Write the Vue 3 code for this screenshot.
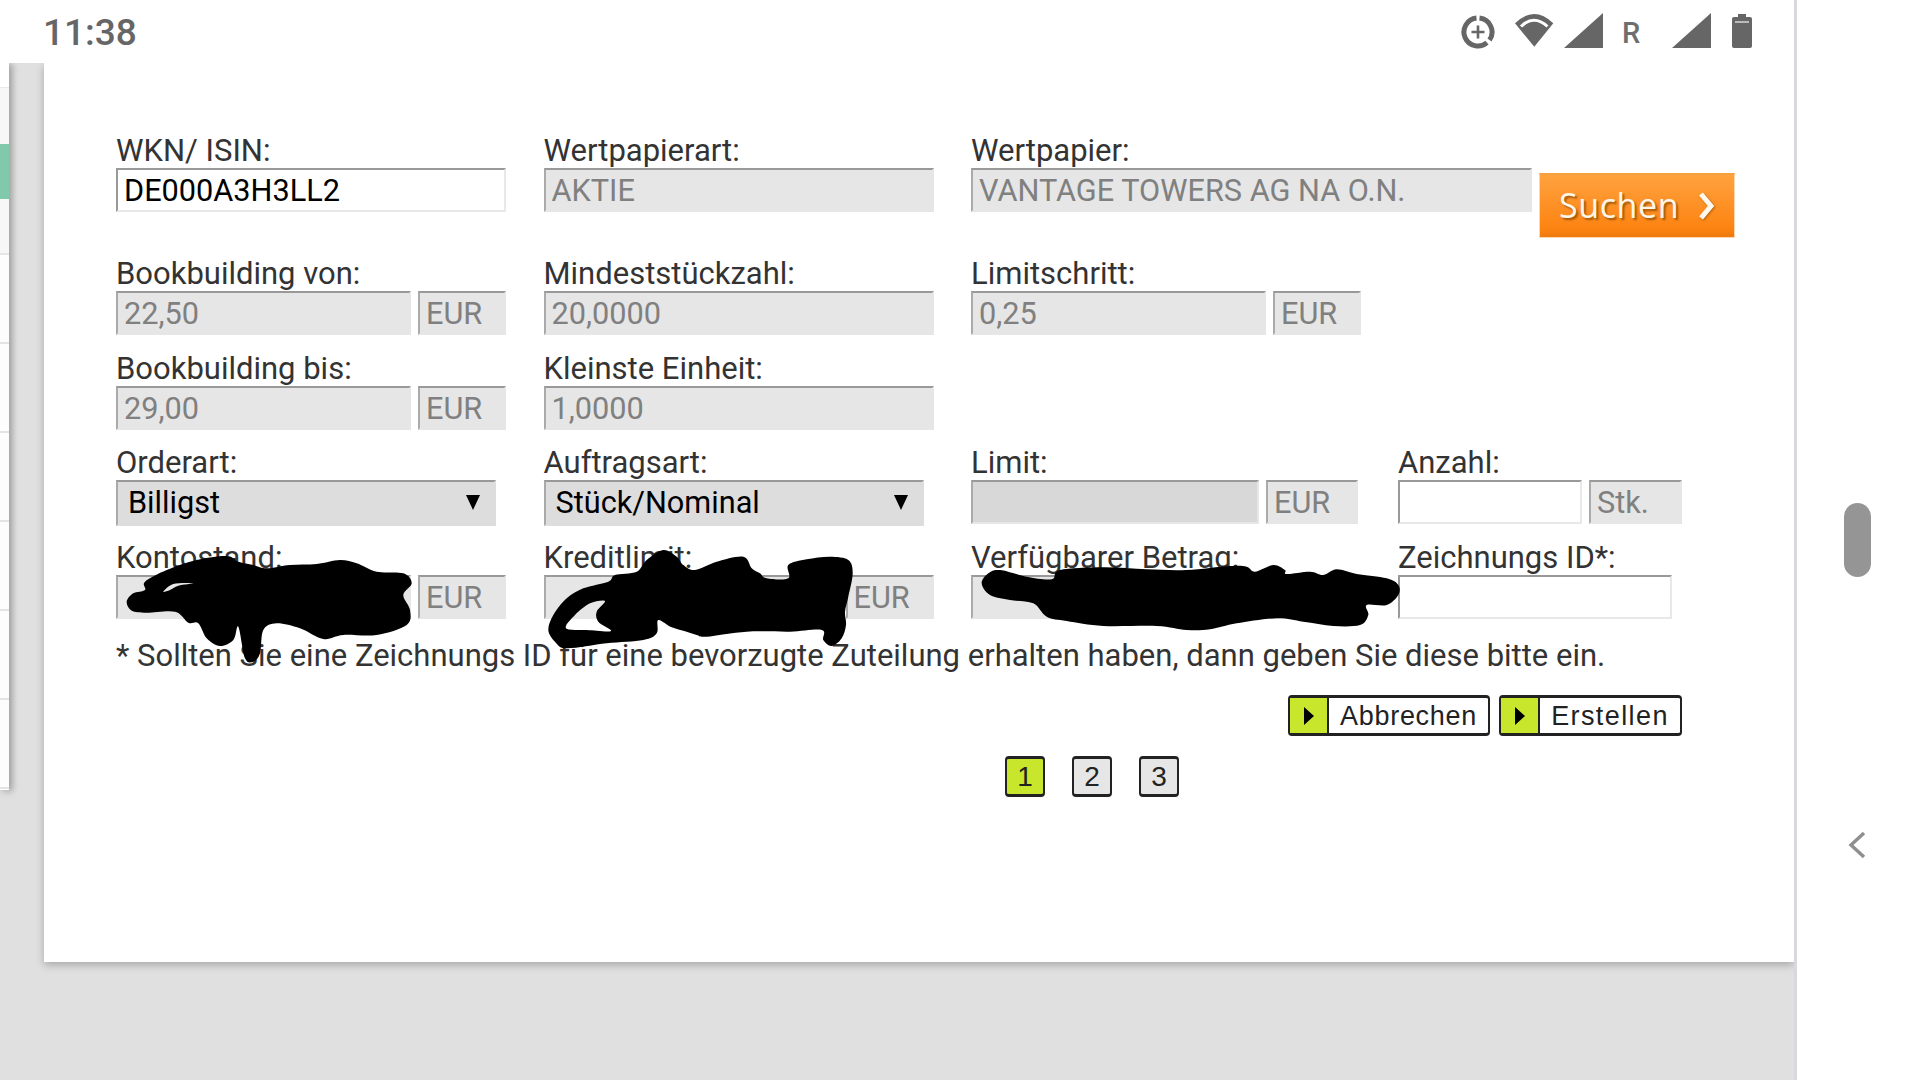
<script setup>
const smooth = (pts) => {
  const n = pts.length
  let d = `M${pts[0][0]} ${pts[0][1]}`
  for (let i = 0; i < n; i++) {
    const p0 = pts[(i - 1 + n) % n], p1 = pts[i], p2 = pts[(i + 1) % n], p3 = pts[(i + 2) % n]
    const c1 = [p1[0] + (p2[0] - p0[0]) / 6, p1[1] + (p2[1] - p0[1]) / 6]
    const c2 = [p2[0] - (p3[0] - p1[0]) / 6, p2[1] - (p3[1] - p1[1]) / 6]
    d += `C${c1[0].toFixed(1)} ${c1[1].toFixed(1)} ${c2[0].toFixed(1)} ${c2[1].toFixed(1)} ${p2[0].toFixed(1)} ${p2[1].toFixed(1)}`
  }
  return d + 'Z'
}
const map = (ox, oy, pts) => pts.map(([x, y]) => [ox + x / 3, oy + y / 3])
const blobA = smooth(map(110, 540, [[50,185],[70,160],[105,150],[105,125],[170,90],[260,60],[350,48],[385,65],[430,75],[470,85],[540,75],[620,72],[690,60],[740,70],[800,95],[880,100],[905,130],[880,165],[900,210],[890,255],[800,285],[700,285],[640,297],[570,265],[500,250],[460,270],[450,340],[430,365],[405,355],[385,260],[370,300],[330,318],[290,295],[265,250],[235,248],[195,215],[110,218],[65,212]]))
const glint = smooth(map(110, 540, [[160,155],[190,132],[250,130],[205,137],[180,150]]))
const blobB = smooth(map(540, 540, [[25,270],[40,225],[80,175],[130,145],[205,125],[225,105],[290,95],[320,60],[370,30],[410,50],[430,75],[465,90],[530,65],[610,50],[635,85],[660,100],[680,115],[745,115],[745,75],[800,58],[870,50],[925,60],[938,100],[925,170],[915,215],[918,255],[905,295],[875,318],[850,300],[845,270],[750,275],[620,275],[500,290],[470,285],[440,275],[395,262],[355,240],[350,280],[310,300],[200,310],[80,325],[45,305]])) +
  smooth(map(540, 540, [[78,265],[105,225],[150,190],[195,183],[170,215],[175,245],[213,273],[140,270]]))
const blobC = smooth(map(970, 550, [[35,100],[55,70],[90,60],[170,80],[245,88],[270,60],[400,52],[530,58],[650,60],[780,48],[830,50],[855,65],[910,45],[945,60],[950,72],[1020,65],[1060,75],[1100,58],[1160,72],[1250,85],[1285,105],[1285,135],[1250,165],[1190,165],[1195,195],[1170,225],[1090,228],[1000,215],[920,205],[800,220],[720,238],[650,240],[560,228],[400,228],[290,213],[230,200],[190,160],[120,150],[60,135]]))
</script>

<template>
  <div class="screen">
    <div class="main">
      <header class="status">
        <span class="time">11:38</span>
        <div class="icons">
          <svg class="i-data" width="34" height="36" viewBox="0 0 34 36">
            <path d="M18.5 5.1A14 14 0 0 1 28.5 27M26 29.7A14 14 0 1 1 15.5 5.1" fill="none" stroke="#666" stroke-width="5" />
            <path d="M10.5 19H23.5M17 12.5V25.5" stroke="#666" stroke-width="2.6" />
          </svg>
          <svg class="i-wifi" width="40" height="36" viewBox="0 0 40 36">
            <path d="M1 10.3Q20 -8.3 39.3 10.3L20.3 33.7Z" fill="#666" />
            <path d="M7 13.5Q20 1 33.5 13.5" fill="none" stroke="#fff" stroke-width="3" />
          </svg>
          <svg class="i-signal" width="40" height="36" viewBox="0 0 40 36"><path d="M0 35H39V0Z" fill="#666" /></svg>
          <span class="roam">R</span>
          <svg class="i-signal2" width="40" height="36" viewBox="0 0 40 36"><path d="M0 35H39V0Z" fill="#666" /></svg>
          <svg class="i-batt" width="20" height="36" viewBox="0 0 20 36">
            <path d="M6 1H14V4H18Q20 4 20 6V33Q20 35 18 35H2Q0 35 0 33V6Q0 4 2 4H6Z" fill="#666" />
            <rect x="3" y="8" width="14" height="2" fill="#bbb" />
          </svg>
        </div>
      </header>

      <div class="stage">
        <aside class="side">
          <div class="s-top"></div>
          <div class="s-item h56"></div>
          <div class="s-green"></div>
          <div class="s-item h56 line"></div>
          <div class="s-row"></div>
          <div class="s-row"></div>
          <div class="s-row"></div>
          <div class="s-row"></div>
          <div class="s-row"></div>
          <div class="s-row"></div>
        </aside>

        <section class="dialog">
          <form class="form" @submit.prevent>
            <div class="row">
              <div class="field">
                <label>WKN/ ISIN:</label>
                <div class="box w390 white dark">DE000A3H3LL2</div>
              </div>
              <div class="field">
                <label>Wertpapierart:</label>
                <div class="box w390 off">AKTIE</div>
              </div>
              <div class="field wide">
                <label>Wertpapier:</label>
                <div class="with-btn">
                  <div class="box w561 off">VANTAGE TOWERS AG NA O.N.</div>
                  <button type="button" class="search">
                    <span>Suchen</span>
                    <svg width="17" height="30" viewBox="0 0 17 30"><path d="M3 3L13 15L3 27" fill="none" stroke="#fff8ee" stroke-width="5" /></svg>
                  </button>
                </div>
              </div>
            </div>

            <div class="row">
              <div class="field">
                <label>Bookbuilding von:</label>
                <div class="pair"><div class="box w295 off">22,50</div><div class="box w88 off">EUR</div></div>
              </div>
              <div class="field">
                <label>Mindeststückzahl:</label>
                <div class="box w390 off">20,0000</div>
              </div>
              <div class="field">
                <label>Limitschritt:</label>
                <div class="pair"><div class="box w295 off">0,25</div><div class="box w88 off">EUR</div></div>
              </div>
            </div>

            <div class="row">
              <div class="field">
                <label>Bookbuilding bis:</label>
                <div class="pair"><div class="box w295 off">29,00</div><div class="box w88 off">EUR</div></div>
              </div>
              <div class="field">
                <label>Kleinste Einheit:</label>
                <div class="box w390 off">1,0000</div>
              </div>
            </div>

            <div class="row">
              <div class="field">
                <label>Orderart:</label>
                <div class="select"><span>Billigst</span><i class="arrow"></i></div>
              </div>
              <div class="field">
                <label>Auftragsart:</label>
                <div class="select"><span>Stück/Nominal</span><i class="arrow"></i></div>
              </div>
              <div class="field">
                <label>Limit:</label>
                <div class="pair"><div class="box w288 off darker"></div><div class="box w92 off">EUR</div></div>
              </div>
              <div class="field">
                <label>Anzahl:</label>
                <div class="pair"><div class="box w184 white"></div><div class="box w93 off">Stk.</div></div>
              </div>
            </div>

            <div class="row">
              <div class="field">
                <label>Kontostand:</label>
                <div class="pair"><div class="box w295 off"></div><div class="box w88 off">EUR</div></div>
              </div>
              <div class="field">
                <label>Kreditlimit:</label>
                <div class="pair"><div class="box w295 off"></div><div class="box w88 off">EUR</div></div>
              </div>
              <div class="field">
                <label>Verfügbarer Betrag:</label>
                <div class="box w390 off"></div>
              </div>
              <div class="field">
                <label>Zeichnungs ID*:</label>
                <div class="box w274 white"></div>
              </div>
            </div>

            <p class="note">* Sollten Sie eine Zeichnungs ID für eine bevorzugte Zuteilung erhalten haben, dann geben Sie diese bitte ein.</p>

            <div class="actions">
              <button type="button" class="act abort"><span class="tip"><i></i></span><span class="lbl">Abbrechen</span></button>
              <button type="button" class="act make"><span class="tip"><i></i></span><span class="lbl">Erstellen</span></button>
            </div>

            <nav class="pages">
              <span class="page on">1</span>
              <span class="page">2</span>
              <span class="page">3</span>
            </nav>
          </form>
        </section>
      </div>
    </div>

    <aside class="rail">
      <div class="handle"></div>
      <svg class="back" width="18" height="28" viewBox="0 0 18 28"><path d="M16 2L3 14L16 26" fill="none" stroke="#8f8f8f" stroke-width="3.4" /></svg>
    </aside>

    <svg class="scribble" width="1920" height="1080" viewBox="0 0 1920 1080">
      <path :d="blobA" fill="#000" />
      <path :d="glint" fill="#e6e6e6" />
      <path :d="blobB" fill="#000" fill-rule="evenodd" />
      <path :d="blobC" fill="#000" />
    </svg>
  </div>
</template>

<style scoped>
.screen {
  position: relative;
  display: flex;
  width: 1920px;
  height: 1080px;
  overflow: hidden;
  background: #fff;
  font-family: Roboto, "Liberation Sans", sans-serif;
}
.main {
  display: flex;
  flex-direction: column;
  width: 1794px;
  height: 1080px;
}
.status {
  display: flex;
  justify-content: space-between;
  height: 63px;
  padding: 13px 42px 0 43px;
  box-sizing: border-box;
  background: #fff;
  flex: none;
}
.time {
  font-size: 37px;
  font-weight: 500;
  line-height: 40px;
  color: #666;
}
.icons { display: flex; align-items: flex-start; }
.icons svg { display: block; flex: none; }
.i-wifi { margin-left: 19px; }
.i-signal { margin-left: 10px; }
.roam {
  margin-left: 18px;
  width: 19px;
  font-size: 29px;
  font-weight: 500;
  line-height: 40px;
  color: #6e6e6e;
}
.i-signal2 { margin-left: 31px; }
.i-batt { margin-left: 20px; }

.stage {
  position: relative;
  display: flex;
  align-items: flex-start;
  flex: 1;
  overflow: hidden;
  background: #e0e0e0;
}
.side {
  width: 9px;
  height: 727px;
  flex: none;
  background: #fff;
  box-shadow: 3px 1px 7px rgba(0, 0, 0, 0.32);
}
.s-top { height: 25px; background: #fff; border-bottom: 1px solid #e8e8e8; box-sizing: border-box; }
.s-item { background: #f7f7f7; }
.h56 { height: 56px; }
.line { border-bottom: 2px solid #e6e6e6; box-sizing: border-box; }
.s-green { height: 55px; background: #80c9aa; }
.s-row {
  height: 89px;
  background: #fdfdfd;
  border-bottom: 2px solid #e4e4e4;
  box-sizing: border-box;
}

.dialog {
  width: 1750px;
  height: 899px;
  margin-left: 35px;
  flex: none;
  background: #fff;
  box-shadow: 0 3px 8px rgba(0, 0, 0, 0.25);
}
.form {
  display: grid;
  grid-template-rows: 123px 95px 94px 95px 98px auto auto auto;
  width: 1566px;
  padding: 69px 0 0 72px;
}
.row {
  display: grid;
  grid-template-columns: 427.5px 427.5px 427px auto;
  align-content: start;
}
.field { min-width: 0; }
.field.wide { grid-column: 3 / span 2; }
label {
  display: block;
  height: 36px;
  font-size: 31px;
  line-height: 38px;
  color: #333;
}
.box {
  box-sizing: border-box;
  height: 44px;
  padding-left: 6px;
  font-size: 30.7px;
  line-height: 41px;
  white-space: nowrap;
  border-style: solid;
  border-width: 2px;
  flex: none;
}
.off {
  background: #e6e6e6;
  color: #808080;
  border-color: #999 #e6e6e6 #e6e6e6 #aaa;
}
.darker { background: #d8d8d8; border-color: #999 #e6e6e6 #e6e6e6 #aaa; }
.white {
  background: #fff;
  border-color: #999 #e8e8e8 #e8e8e8 #999;
}
.dark { color: #000; }
.w390 { width: 390px; }
.w561 { width: 561px; }
.w295 { width: 295px; }
.w88 { width: 88px; }
.w288 { width: 288px; }
.w92 { width: 92px; }
.w184 { width: 184px; }
.w93 { width: 93px; }
.w274 { width: 274px; }
.pair { display: flex; gap: 7px; }
.with-btn { display: flex; align-items: flex-start; gap: 7px; }

.search {
  display: flex;
  align-items: center;
  width: 196px;
  height: 65px;
  margin-top: 5px;
  padding: 0 0 0 19px;
  box-sizing: border-box;
  border: 1px solid #fbd9b0;
  border-top: 2px solid #f8a040;
  background: linear-gradient(#ffa23f, #fd8412 85%, #ee7a0c);
  flex: none;
  cursor: pointer;
}
.search span {
  font-family: "Open Sans", sans-serif;
  font-size: 34px;
  letter-spacing: 0.6px;
  line-height: 44px;
  margin-top: -3px;
  color: #fff6e8;
  text-shadow: 2px 2px 2px rgba(130, 70, 0, 0.75);
}
.search svg { margin-left: 19px; filter: drop-shadow(1px 1px 1px rgba(130, 70, 0, 0.6)); }

.select {
  display: flex;
  align-items: center;
  justify-content: space-between;
  box-sizing: border-box;
  width: 380px;
  height: 46px;
  padding: 0 14px 2px 10px;
  background: #ddd;
  border-style: solid;
  border-width: 2px;
  border-color: #999 #ddd #ddd #aaa;
  font-size: 30.7px;
  color: #000;
}
.arrow {
  width: 0;
  height: 0;
  border-left: 7px solid transparent;
  border-right: 7px solid transparent;
  border-top: 15px solid #000;
}
.note {
  margin: 0;
  font-size: 31px;
  line-height: 38px;
  height: 36px;
  color: #333;
  white-space: nowrap;
}
.actions {
  display: flex;
  justify-content: flex-end;
  gap: 9px;
  margin-top: 22px;
}
.act {
  display: flex;
  align-items: stretch;
  height: 41px;
  padding: 0;
  box-sizing: border-box;
  border-style: solid;
  border-color: #222;
  border-width: 3px 2px;
  border-radius: 4px;
  background: #fff;
  font-family: "Liberation Sans", sans-serif;
  color: #222;
  cursor: pointer;
}
.abort { width: 202px; }
.make { width: 183px; }
.tip {
  display: flex;
  align-items: center;
  justify-content: center;
  width: 39px;
  background: #c8e62c;
  border-right: 2px solid #222;
  box-sizing: border-box;
  flex: none;
}
.tip i {
  width: 0;
  height: 0;
  border-top: 9px solid transparent;
  border-bottom: 9px solid transparent;
  border-left: 10px solid #000;
}
.lbl {
  flex: 1;
  font-size: 27px;
  line-height: 36px;
  text-align: center;
}
.abort .lbl { letter-spacing: 0.7px; }
.make .lbl { letter-spacing: 1.4px; }
.pages {
  display: flex;
  gap: 27px;
  margin: 20px 0 0 889px;
}
.page {
  width: 40px;
  height: 41px;
  box-sizing: border-box;
  border-style: solid;
  border-color: #222;
  border-width: 3px 2px;
  border-radius: 4px;
  background: #e6e6e6;
  font-family: "Liberation Sans", sans-serif;
  font-size: 28px;
  line-height: 35px;
  text-align: center;
  color: #222;
}
.page.on { background: #c8e62c; }

.rail {
  display: flex;
  flex-direction: column;
  align-items: center;
  width: 126px;
  flex: none;
  padding: 503px 0 0 0;
  box-sizing: border-box;
  background: #fff;
  border-left: 3px solid #d8d9de;
}
.handle {
  width: 27px;
  height: 74px;
  margin-left: -3px;
  border-radius: 14px;
  background: #959595;
}
.back { margin-top: 254px; margin-left: -3px; }
.scribble { position: absolute; left: 0; top: 0; pointer-events: none; }
</style>
